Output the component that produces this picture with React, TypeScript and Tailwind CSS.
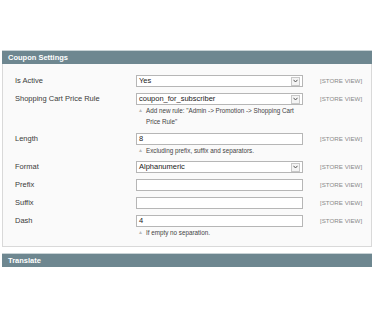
import React from "react";

const font = { fontFamily: '"Liberation Sans", Arial, sans-serif' };

function Select({ value }: { value: string }) {
  return (
    <div className="h-[12px] w-[167px] border border-[#b6b6b6] bg-white flex items-center justify-between pl-[2px] pr-[2px]">
      <span className="text-[7.5px] leading-none text-[#222]">{value}</span>
      <span className="w-[9px] h-[9px] border border-[#c8c8c8] bg-[#f4f4f4] flex items-center justify-center">
        <svg width="5" height="4" viewBox="0 0 5 4">
          <path d="M0.5 0.8 L2.5 3 L4.5 0.8" stroke="#555" strokeWidth="1" fill="none" />
        </svg>
      </span>
    </div>
  );
}

function Input({ value }: { value?: string }) {
  return (
    <div className="h-[12px] w-[167px] border border-[#b6b6b6] bg-white flex items-center pl-[2px]">
      <span className="text-[7.5px] leading-none text-[#222]">{value}</span>
    </div>
  );
}

function Note({ children }: { children: React.ReactNode }) {
  return (
    <div className="flex gap-[3px] pl-[2px] text-[6.3px] leading-[11px] text-[#444]">
      <span className="text-[#bbb] text-[5px] leading-[11px]">▲</span>
      <span className="w-[155px]">{children}</span>
    </div>
  );
}

function Row({
  label,
  children,
  className = "",
}: {
  label: string;
  children: React.ReactNode;
  className?: string;
}) {
  return (
    <div className={"flex items-start " + className}>
      <div className="w-[133px] pl-[12px] text-[7.5px] leading-[12px] text-[#3a3a3a]">{label}</div>
      <div className="w-[184px]">{children}</div>
      <div className="text-[6.2px] leading-[12px] text-[#8a8a8a]">[STORE VIEW]</div>
    </div>
  );
}

export default function App() {
  return (
    <div className="w-[374px] h-[328px] bg-white" style={font}>
      <div className="h-[50px]" />
      <div className="mx-[2px]">
        <div className="h-[14px] bg-[#6e8790] border-t border-[#c9d3d6] flex items-center pl-[6px]">
          <span className="text-white font-bold text-[7.5px] leading-none">Coupon Settings</span>
        </div>
        <div className="bg-[#fafafa] border border-t-0 border-[#d9d9d9] pt-[11px] pb-[8px] flex flex-col">
          <Row label="Is Active">
            <Select value="Yes" />
          </Row>
          <Row label="Shopping Cart Price Rule" className="mt-[6px]">
            <Select value="coupon_for_subscriber" />
            <Note>Add new rule: "Admin -&gt; Promotion -&gt; Shopping Cart Price Rule"</Note>
          </Row>
          <Row label="Length" className="mt-[6px]">
            <Input value="8" />
            <Note>Excluding prefix, suffix and separators.</Note>
          </Row>
          <Row label="Format" className="mt-[5px]">
            <Select value="Alphanumeric" />
          </Row>
          <Row label="Prefix" className="mt-[6px]">
            <Input />
          </Row>
          <Row label="Suffix" className="mt-[6px]">
            <Input />
          </Row>
          <Row label="Dash" className="mt-[6px]">
            <Input value="4" />
            <Note>If empty no separation.</Note>
          </Row>
        </div>
        <div className="mt-[6px] h-[14px] bg-[#6e8790] border-t border-[#c9d3d6] flex items-center pl-[6px]">
          <span className="text-white font-bold text-[7.5px] leading-none">Translate</span>
        </div>
      </div>
    </div>
  );
}
